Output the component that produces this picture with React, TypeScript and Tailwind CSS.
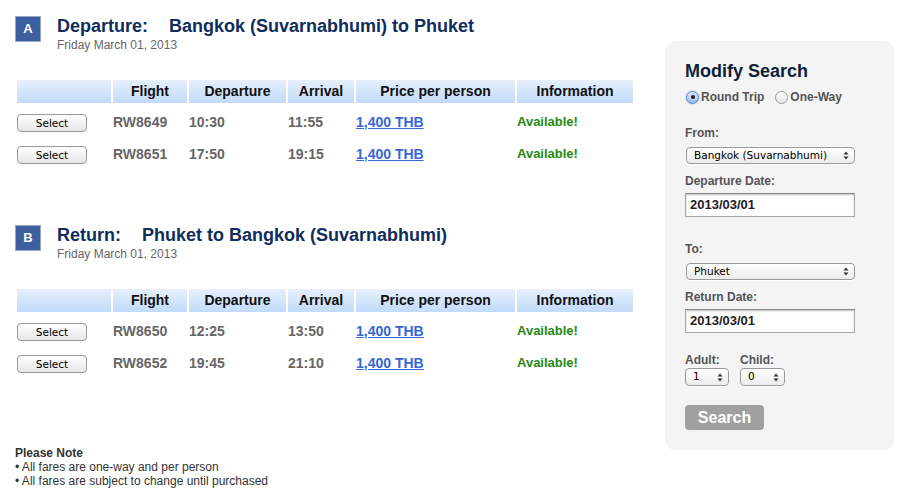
const font = { fontFamily: '"Liberation Sans", Arial, sans-serif' };

type Flight = { code: string; dep: string; arr: string };

const departures: Flight[] = [
  { code: "RW8649", dep: "10:30", arr: "11:55" },
  { code: "RW8651", dep: "17:50", arr: "19:15" },
];

const returns: Flight[] = [
  { code: "RW8650", dep: "12:25", arr: "13:50" },
  { code: "RW8652", dep: "19:45", arr: "21:10" },
];

const cols = "grid grid-cols-[94px_74px_97px_66px_159px_116px] gap-x-[2px]";

function Arrows() {
  return (
    <svg width="6" height="9" viewBox="0 0 6 9" className="shrink-0">
      <path d="M3 0.5 L5.5 3.5 H0.5 Z" fill="#333" />
      <path d="M3 8.5 L5.5 5.5 H0.5 Z" fill="#333" />
    </svg>
  );
}

function FakeSelect({ value, width, height }: { value: string; width: string; height: string }) {
  return (
    <div
      className={`${width} ${height} flex items-center justify-between pl-[7px] pr-[5px] rounded-[4px] border border-[#9a9a9a] bg-gradient-to-b from-white to-[#ececec] shadow-[0_1px_0_rgba(255,255,255,0.8)]`}
    >
      <span className="text-[10.5px] text-black" style={{ fontFamily: '"DejaVu Sans", sans-serif' }}>
        {value}
      </span>
      <Arrows />
    </div>
  );
}

function DateInput({ value }: { value: string }) {
  return (
    <div className="w-[170px] h-[24px] flex items-center px-[4px] bg-white border border-[#a9a9a9] border-t-[#8a8a8a] shadow-[inset_0_1px_2px_rgba(0,0,0,0.25)]">
      <span className="text-[13px] font-bold text-[#222]">{value}</span>
    </div>
  );
}

function Section({ letter, label, route, flights }: { letter: string; label: string; route: string; flights: Flight[] }) {
  return (
    <section>
      <div className="flex">
        <div className="mt-[16px] w-[26px] h-[26px] flex items-center justify-center bg-[#3d5e9f] border border-[#97a6c2] text-white text-[13px] font-bold">
          {letter}
        </div>
        <div className="ml-[16px] mt-[15px]">
          <h2 className="h-[22px] leading-[22px] text-[18px] font-bold text-[#0f2d5d]">
            {label}
            <span className="ml-[21px]">{route}</span>
          </h2>
          <p className="mt-[1px] h-[14px] leading-[14px] text-[12px] text-[#666]">Friday March 01, 2013</p>
        </div>
      </div>

      <div className="ml-[2px] mt-[28px]">
        <div className={`${cols} h-[23px]`}>
          {["", "Flight", "Departure", "Arrival", "Price per person", "Information"].map((h, i) => (
            <div
              key={i}
              className="flex items-center justify-center pb-[1px] bg-gradient-to-b from-[#e6f0fd] to-[#c2dafa] text-[14px] font-bold text-[#111]"
            >
              {h}
            </div>
          ))}
        </div>
        <div className="mt-[3px]">
          {flights.map((f) => (
            <div key={f.code} className={`${cols} h-[32px] items-center`}>
              <div>
                <button
                  className="w-[70px] h-[18px] rounded-[4px] border border-[#9a9a9a] bg-gradient-to-b from-white to-[#e6e6e6] text-[10.5px] text-black leading-none"
                  style={{ fontFamily: '"DejaVu Sans", sans-serif' }}
                >
                  Select
                </button>
              </div>
              <div className="text-[14px] font-bold text-[#666]">{f.code}</div>
              <div className="text-[14px] font-bold text-[#666]">{f.dep}</div>
              <div className="text-[14px] font-bold text-[#666]">{f.arr}</div>
              <div>
                <a href="#" className="text-[14px] font-bold text-[#3567d2] underline">1,400 THB</a>
              </div>
              <div className="text-[13px] font-bold text-[#1f8a14]">Available!</div>
            </div>
          ))}
        </div>
      </div>
    </section>
  );
}

function Radio({ checked, label }: { checked?: boolean; label: string }) {
  return (
    <span className="flex items-center">
      <span
        className={
          checked
            ? "w-[13px] h-[13px] rounded-full border border-[#5d86c4] bg-gradient-to-b from-[#dbe8fa] to-[#9dbde9] flex items-center justify-center shadow-[0_0_2px_#7aa4e0]"
            : "w-[13px] h-[13px] rounded-full border border-[#9a9a9a] bg-gradient-to-b from-white to-[#e4e4e4]"
        }
      >
        {checked && <span className="w-[4px] h-[4px] rounded-full bg-[#222]" />}
      </span>
      <span className="ml-[2px] text-[12px] font-bold text-[#555]">{label}</span>
    </span>
  );
}

function Sidebar() {
  return (
    <aside className="mt-[41px] w-[229px] h-[409px] rounded-[10px] bg-[#f4f4f4] pl-[20px] pt-[19px]">
      <h2 className="h-[22px] leading-[22px] text-[18px] font-bold text-[#0f1f3a]">Modify Search</h2>
      <div className="mt-[7px] h-[16px] flex items-center gap-[11px] pl-[1px]">
        <Radio checked label="Round Trip" />
        <Radio label="One-Way" />
      </div>

      <p className="mt-[21px] h-[14px] leading-[14px] text-[12px] font-bold text-[#555]">From:</p>
      <div className="mt-[7px] ml-[1px]">
        <FakeSelect value="Bangkok (Suvarnabhumi)" width="w-[169px]" height="h-[17px]" />
      </div>
      <p className="mt-[10px] h-[14px] leading-[14px] text-[12px] font-bold text-[#555]">Departure Date:</p>
      <div className="mt-[5px]">
        <DateInput value="2013/03/01" />
      </div>

      <p className="mt-[25px] h-[14px] leading-[14px] text-[12px] font-bold text-[#555]">To:</p>
      <div className="mt-[7px] ml-[1px]">
        <FakeSelect value="Phuket" width="w-[169px]" height="h-[17px]" />
      </div>
      <p className="mt-[10px] h-[14px] leading-[14px] text-[12px] font-bold text-[#555]">Return Date:</p>
      <div className="mt-[5px]">
        <DateInput value="2013/03/01" />
      </div>

      <div className="mt-[20px] flex gap-[11px]">
        <div>
          <p className="h-[14px] leading-[14px] text-[12px] font-bold text-[#555]">Adult:</p>
          <div className="mt-[1px]">
            <FakeSelect value="1" width="w-[44px]" height="h-[18px]" />
          </div>
        </div>
        <div>
          <p className="h-[14px] leading-[14px] text-[12px] font-bold text-[#555]">Child:</p>
          <div className="mt-[1px]">
            <FakeSelect value="0" width="w-[45px]" height="h-[18px]" />
          </div>
        </div>
      </div>

      <button className="mt-[19px] w-[79px] h-[25px] rounded-[4px] bg-[#a0a0a0] text-white text-[16px] font-bold leading-none">
        Search
      </button>
    </aside>
  );
}

export default function App() {
  return (
    <div className="w-[915px] h-[503px] bg-white flex" style={font}>
      <main className="ml-[15px] w-[620px]">
        <Section letter="A" label="Departure:" route="Bangkok (Suvarnabhumi) to Phuket" flights={departures} />
        <div className="mt-[39px]">
          <Section letter="B" label="Return:" route="Phuket to Bangkok (Suvarnabhumi)" flights={returns} />
        </div>
        <div className="mt-[67px] text-[12px] leading-[14px] text-[#333]">
          <p className="font-bold">Please Note</p>
          <p>• All fares are one-way and per person</p>
          <p>• All fares are subject to change until purchased</p>
        </div>
      </main>
      <div className="ml-[30px]">
        <Sidebar />
      </div>
    </div>
  );
}
